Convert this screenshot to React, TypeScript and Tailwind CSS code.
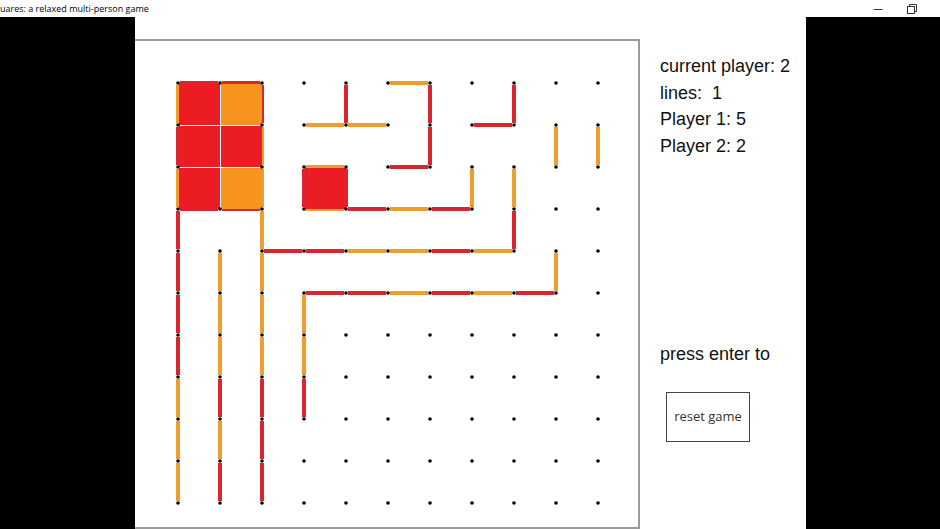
import React from "react";

type C = "R" | "O";

const LINE: Record<C, string> = { R: "#d9262e", O: "#ee9d2f" };
const FILL: Record<C, string> = { R: "#ec1c24", O: "#f7941d" };

// [row, col, colour]
const horizontal: [number, number, C][] = [
  [0, 0, "R"], [0, 1, "R"], [0, 5, "O"],
  [1, 3, "O"], [1, 4, "O"], [1, 7, "R"],
  [2, 3, "O"], [2, 5, "R"],
  [3, 0, "R"], [3, 1, "R"], [3, 3, "O"], [3, 4, "R"], [3, 5, "O"], [3, 6, "R"],
  [4, 2, "R"], [4, 3, "R"], [4, 4, "O"], [4, 5, "O"], [4, 6, "R"], [4, 7, "O"],
  [5, 3, "R"], [5, 4, "R"], [5, 5, "O"], [5, 6, "R"], [5, 7, "O"], [5, 8, "R"],
];

const vertical: [number, number, C][] = [
  [0, 0, "O"], [1, 0, "R"], [2, 0, "O"], [3, 0, "R"], [4, 0, "R"], [5, 0, "R"], [6, 0, "R"], [7, 0, "O"], [8, 0, "O"], [9, 0, "O"],
  [4, 1, "O"], [5, 1, "O"], [6, 1, "O"], [7, 1, "R"], [8, 1, "O"], [9, 1, "R"],
  [0, 2, "R"], [1, 2, "O"], [2, 2, "O"], [3, 2, "O"], [4, 2, "O"], [5, 2, "O"], [6, 2, "O"], [7, 2, "R"], [8, 2, "R"], [9, 2, "R"],
  [2, 3, "R"], [5, 3, "O"], [6, 3, "O"], [7, 3, "R"],
  [0, 4, "R"], [2, 4, "R"],
  [0, 6, "R"], [1, 6, "R"],
  [2, 7, "O"],
  [0, 8, "R"], [2, 8, "O"], [3, 8, "R"],
  [1, 9, "O"], [4, 9, "O"],
  [1, 10, "O"],
];

const boxes: [number, number, C][] = [
  [0, 0, "R"], [0, 1, "O"],
  [1, 0, "R"], [1, 1, "R"],
  [2, 0, "R"], [2, 1, "O"],
  [2, 3, "R"],
];

const gx = (c: number) => 43 + 42 * c;
const gy = (r: number) => 42 + 42 * r;

function Board() {
  const dots: [number, number][] = [];
  for (let r = 0; r < 11; r++)
    for (let c = 0; c < 11; c++) {
      if (c === 1 && (r === 1 || r === 2)) continue;
      dots.push([r, c]);
    }

  return (
    <svg width="503" height="486" className="block">
      {horizontal.map(([r, c, k]) => (
        <line key={`h${r}-${c}`} x1={gx(c) + 2} y1={gy(r)} x2={gx(c + 1) - 2} y2={gy(r)} stroke={LINE[k]} strokeWidth="4" />
      ))}
      {vertical.map(([r, c, k]) => (
        <line key={`v${r}-${c}`} x1={gx(c)} y1={gy(r) + 2} x2={gx(c)} y2={gy(r + 1) - 2} stroke={LINE[k]} strokeWidth="4" />
      ))}
      {boxes.map(([r, c, k]) => (
        <rect key={`b${r}-${c}`} x={gx(c) + 1} y={gy(r) + 1} width="41" height="41" fill={FILL[k]} />
      ))}
      {dots.map(([r, c]) => (
        <circle key={`d${r}-${c}`} cx={gx(c)} cy={gy(r)} r="1.8" fill="#000" />
      ))}
    </svg>
  );
}

export default function App() {
  return (
    <div className="w-[940px] h-[529px] overflow-hidden bg-black flex flex-col">
      {/* title bar */}
      <div className="h-[17px] bg-white flex items-center">
        <span className="text-[9px] leading-[17px] text-black whitespace-pre" style={{ fontFamily: '"Open Sans", sans-serif' }}>
          uares: a relaxed multi-person game
        </span>
        <div className="ml-auto flex pr-[11px]">
          <div className="w-[34px] h-[17px] flex items-center justify-center">
            <svg width="10" height="10" viewBox="0 0 10 10">
              <line x1="0.5" y1="5.5" x2="9.5" y2="5.5" stroke="#333" strokeWidth="1" />
            </svg>
          </div>
          <div className="w-[34px] h-[17px] flex items-center justify-center">
            <svg width="10" height="10" viewBox="0 0 10 10">
              <rect x="0.5" y="2.5" width="7" height="7" fill="none" stroke="#333" strokeWidth="1" />
              <path d="M2.5 2.5 V0.5 H9.5 V7.5 H7.5" fill="none" stroke="#333" strokeWidth="1" />
            </svg>
          </div>
        </div>
      </div>

      <div className="flex flex-1">
        <div className="w-[135px] bg-black" />
        <div className="w-[671px] bg-white pt-[22px] flex">
          <div className="w-[505px] h-[490px] border-t-2 border-r-2 border-b-2 border-[#9a9a9a]">
            <Board />
          </div>

          <div className="ml-[20px] pt-[14px] text-[18px] leading-[26.5px] text-[#111]" style={{ fontFamily: '"Liberation Sans", Arial, sans-serif' }}>
            <div className="whitespace-pre">current player: 2</div>
            <div className="whitespace-pre">lines:  1</div>
            <div className="whitespace-pre">Player 1: 5</div>
            <div className="whitespace-pre">Player 2: 2</div>
            <div className="mt-[182px] whitespace-pre">press enter to</div>
            <button
              className="mt-[24px] ml-[6px] w-[84px] h-[50px] border border-[#444] bg-white flex items-center justify-center text-[13px] text-[#333]"
              style={{ fontFamily: '"Open Sans", sans-serif' }}
            >
              reset game
            </button>
          </div>
        </div>
        <div className="flex-1 bg-black" />
      </div>
    </div>
  );
}
